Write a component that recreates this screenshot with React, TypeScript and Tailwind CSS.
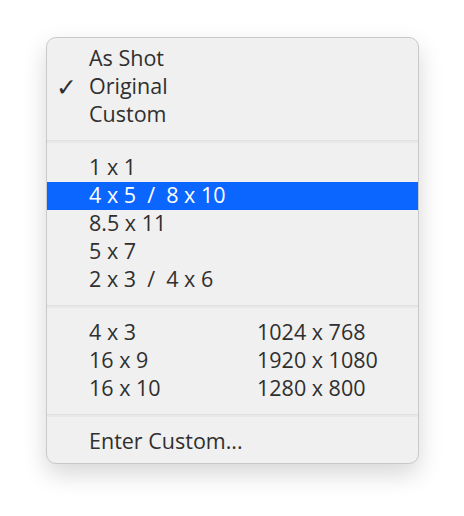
type Item = { label: string; checked?: boolean; active?: boolean };

const sources: Item[] = [
  { label: "As Shot" },
  { label: "Original", checked: true },
  { label: "Custom" },
];

const ratios: Item[] = [
  { label: "1 x 1" },
  { label: "4 x 5  /  8 x 10", active: true },
  { label: "8.5 x 11" },
  { label: "5 x 7" },
  { label: "2 x 3  /  4 x 6" },
];

const screens = [
  ["4 x 3", "1024 x 768"],
  ["16 x 9", "1920 x 1080"],
  ["16 x 10", "1280 x 800"],
];

const Separator = () => (
  <div className="h-[25px] flex flex-col justify-center">
    <div className="h-[1px] bg-[#e0e0e0]" />
    <div className="h-[2px] bg-[#e8e8e8]" />
  </div>
);

const Row = ({ label, checked, active }: Item) => (
  <div
    className={
      "relative h-[28px] flex items-center pl-[42px] pb-[2px] whitespace-pre " +
      (active ? "bg-[#0a66fe] text-white" : "text-[#2f2f2f]")
    }
  >
    {checked && (
      <span className="absolute left-[9px] top-0 h-[28px] flex items-center text-[25px] font-['DejaVu_Sans',sans-serif]">
        ✓
      </span>
    )}
    {label}
  </div>
);

export default function App() {
  return (
    <div className="w-[464px] h-[516px] bg-white pt-[37px] pl-[46px]">
      <div className="w-[373px] bg-[#f0f0f0] border border-[#c9c9c9] rounded-[10px] pt-[7px] pb-[7px] shadow-[0_10px_24px_rgba(0,0,0,0.16)] font-['Open_Sans',sans-serif] text-[21.5px] leading-none overflow-hidden">
        {sources.map((s) => (
          <Row key={s.label} {...s} />
        ))}
        <Separator />
        {ratios.map((r) => (
          <Row key={r.label} {...r} />
        ))}
        <Separator />
        {screens.map(([a, b]) => (
          <div key={a} className="h-[28px] grid grid-cols-[168px_1fr] items-center pl-[42px] pb-[2px] text-[#2f2f2f]">
            <span>{a}</span>
            <span>{b}</span>
          </div>
        ))}
        <Separator />
        <Row label="Enter Custom..." />
      </div>
    </div>
  );
}
